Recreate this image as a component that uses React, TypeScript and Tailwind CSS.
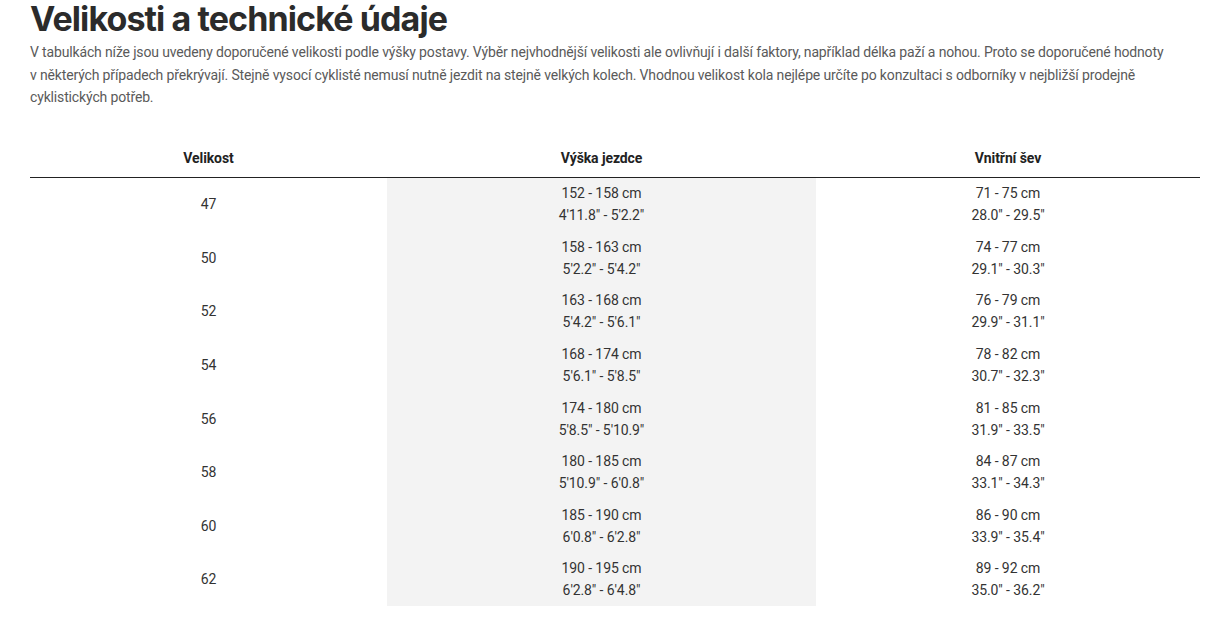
import React from "react";

const rows = [
  { size: "47", cm: "152 - 158 cm", inch: "4'11.8\" - 5'2.2\"", seamCm: "71 - 75 cm", seamIn: "28.0\" - 29.5\"" },
  { size: "50", cm: "158 - 163 cm", inch: "5'2.2\" - 5'4.2\"", seamCm: "74 - 77 cm", seamIn: "29.1\" - 30.3\"" },
  { size: "52", cm: "163 - 168 cm", inch: "5'4.2\" - 5'6.1\"", seamCm: "76 - 79 cm", seamIn: "29.9\" - 31.1\"" },
  { size: "54", cm: "168 - 174 cm", inch: "5'6.1\" - 5'8.5\"", seamCm: "78 - 82 cm", seamIn: "30.7\" - 32.3\"" },
  { size: "56", cm: "174 - 180 cm", inch: "5'8.5\" - 5'10.9\"", seamCm: "81 - 85 cm", seamIn: "31.9\" - 33.5\"" },
  { size: "58", cm: "180 - 185 cm", inch: "5'10.9\" - 6'0.8\"", seamCm: "84 - 87 cm", seamIn: "33.1\" - 34.3\"" },
  { size: "60", cm: "185 - 190 cm", inch: "6'0.8\" - 6'2.8\"", seamCm: "86 - 90 cm", seamIn: "33.9\" - 35.4\"" },
  { size: "62", cm: "190 - 195 cm", inch: "6'2.8\" - 6'4.8\"", seamCm: "89 - 92 cm", seamIn: "35.0\" - 36.2\"" },
];

export default function App() {
  return (
    <main className="w-full bg-white px-[30px] font-['Roboto',sans-serif]">
      {/* Title */}
      <h2 className="pt-[1px] text-[34px] leading-[36px] font-bold tracking-[-0.9px] text-[#2b2b2b] font-['Inter',sans-serif]">
        Velikosti a technické údaje
      </h2>
      <p className="mt-[4px] w-[1139px] text-[14px] leading-[22.5px] tracking-[-0.15px] text-[#5a5a5a]">
        V tabulkách níže jsou uvedeny doporučené velikosti podle výšky postavy. Výběr nejvhodnější velikosti ale ovlivňují i další faktory, například délka paží a nohou. Proto se doporučené hodnoty v některých případech překrývají. Stejně vysocí cyklisté nemusí nutně jezdit na stejně velkých kolech. Vhodnou velikost kola nejlépe určíte po konzultaci s odborníky v nejbližší prodejně cyklistických potřeb.
      </p>

      {/* Table */}
      <div className="mt-[30px] w-[1170px] text-[14px] leading-[22px] tracking-[-0.1px] text-[#333]">
        <div className="grid grid-cols-[357px_429px_384px] border-b border-[#222] font-bold text-[#222]">
          <div className="pt-[8px] pb-[8px] text-center">Velikost</div>
          <div className="pt-[8px] pb-[8px] text-center">Výška jezdce</div>
          <div className="pt-[8px] pb-[8px] text-center">Vnitřní šev</div>
        </div>
        {rows.map((r) => (
          <div key={r.size} className="grid grid-cols-[357px_429px_384px]">
            <div className="flex items-center justify-center">{r.size}</div>
            <div className="bg-[#f3f3f3] py-[4.8px] text-center">
              <div>{r.cm}</div>
              <div>{r.inch}</div>
            </div>
            <div className="py-[4.8px] text-center">
              <div>{r.seamCm}</div>
              <div>{r.seamIn}</div>
            </div>
          </div>
        ))}
      </div>
    </main>
  );
}
